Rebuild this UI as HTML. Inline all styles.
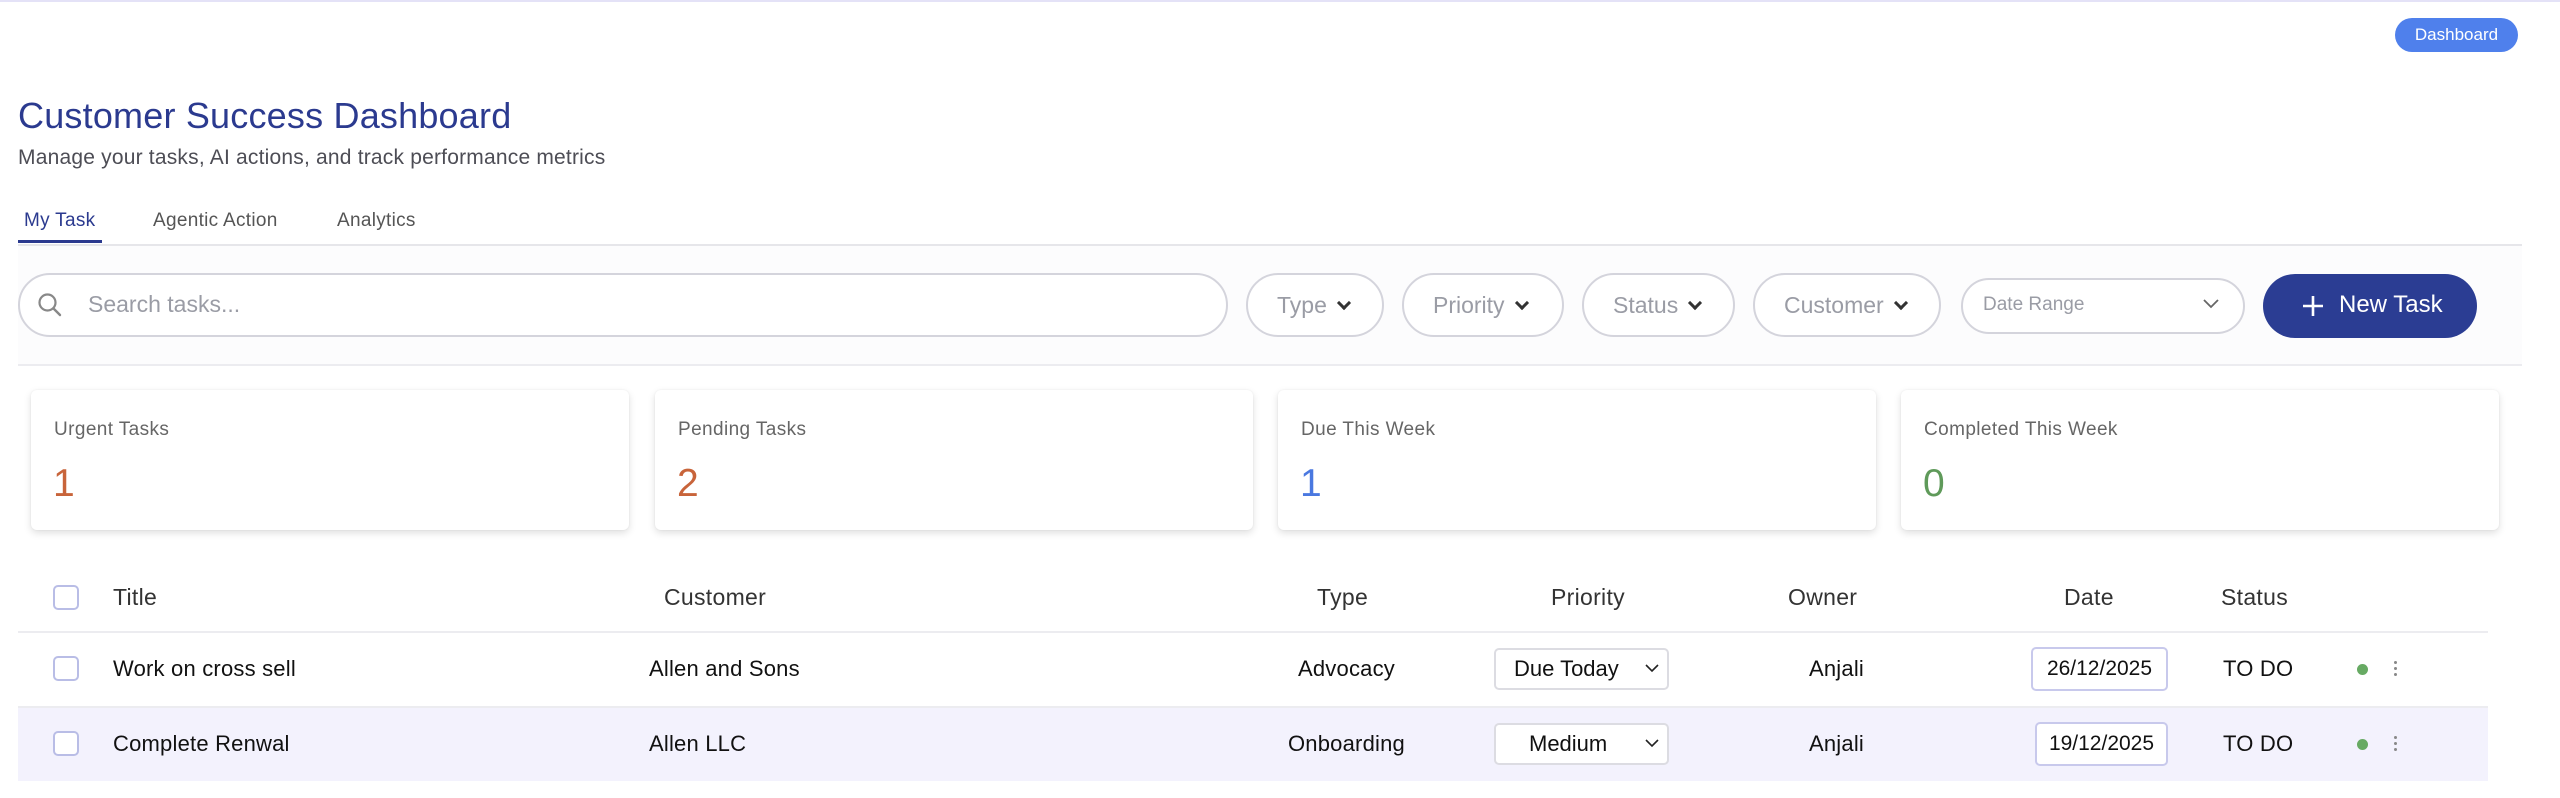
<!DOCTYPE html>
<html><head><meta charset="utf-8"><style>
*{box-sizing:border-box;margin:0;padding:0}
body{width:2560px;height:798px;background:#fff;font-family:"Liberation Sans",Arial,sans-serif;position:relative;overflow:hidden}
.a{position:absolute}
.topline{left:0;top:0;width:2560px;height:2px;background:#e4e2f7}
.pill{left:2395px;top:18px;width:123px;height:34px;border-radius:17px;background:#4f80ec;color:#fff;font-size:17px;line-height:34px;text-align:center}
h1{position:absolute;left:18px;top:95px;font-size:36px;font-weight:400;color:#2b3a8f;white-space:nowrap;letter-spacing:0.2px}
.sub{left:18px;top:146px;font-size:21px;color:#4d4d55;white-space:nowrap;letter-spacing:0.2px}
.tab{top:210px;font-size:19px;color:#555;white-space:nowrap;letter-spacing:0.3px}
.fbar{left:18px;top:244px;width:2504px;height:122px;background:#fcfcfd;border-top:2px solid #e6e6ea;border-bottom:2px solid #ececf0}
.search{left:18px;top:273px;width:1210px;height:64px;border:2px solid #d4d4dc;border-radius:32px;background:#fff}
.flt{top:273px;height:64px;border:2px solid #d4d4dc;border-radius:32px;background:#fff;font-size:23px;color:#9a9ca5;line-height:60px;padding-left:29px;white-space:nowrap}
.chev{display:inline-block;width:10px;height:10px;border-right:3px solid #333;border-bottom:3px solid #333;transform:rotate(45deg);margin-left:12px;position:relative;top:-5px}
.card{top:390px;height:140px;width:598px;background:#fff;border-radius:6px;box-shadow:0 3px 8px rgba(0,0,0,.13),0 0 2px rgba(0,0,0,.06)}
.card .l{position:absolute;left:23px;top:29px;font-size:19px;color:#666;letter-spacing:0.4px}
.card .n{position:absolute;left:22px;top:72px;font-size:39px}
.th{top:584px;font-size:23px;color:#333;white-space:nowrap;letter-spacing:0.3px}
.td{font-size:22px;color:#111;white-space:nowrap;letter-spacing:0.2px}
.cb{width:26px;height:25px;border:2px solid #b9bde6;border-radius:5px;background:#fff}
.sel{width:175px;height:42px;border:2px solid #dcdce2;border-radius:5px;background:#fff;font-size:22px;line-height:38px;color:#111}
.date{height:44px;border:2px solid #c8c9ec;border-radius:5px;background:#fff;font-size:21px;line-height:40px;text-align:center;color:#111}
.dot{width:11px;height:11px;border-radius:50%;background:#67aa63}
.kb{width:3px;height:3px;border-radius:50%;background:#888}
</style></head><body>
<div class="a topline"></div>
<div class="a pill">Dashboard</div>
<h1>Customer Success Dashboard</h1>
<div class="a sub">Manage your tasks, AI actions, and track performance metrics</div>
<div class="a tab" style="left:24px;color:#2b3a8f">My Task</div>
<div class="a tab" style="left:153px">Agentic Action</div>
<div class="a tab" style="left:337px">Analytics</div>
<div class="a" style="left:18px;top:240px;width:84px;height:3px;background:#2b3a8f"></div>
<div class="a fbar"></div>
<div class="a search"></div>
<svg class="a" style="left:36px;top:291px" width="28" height="28" viewBox="0 0 28 28"><circle cx="11.5" cy="11.5" r="8" fill="none" stroke="#888" stroke-width="2.2"/><line x1="17.5" y1="17.5" x2="24" y2="24" stroke="#888" stroke-width="2.4" stroke-linecap="round"/></svg>
<div class="a" style="left:88px;top:291px;font-size:23px;color:#9a9ca5">Search tasks...</div>
<div class="a flt" style="left:1246px;width:138px">Type<span class="chev"></span></div>
<div class="a flt" style="left:1402px;width:162px">Priority<span class="chev"></span></div>
<div class="a flt" style="left:1582px;width:153px">Status<span class="chev"></span></div>
<div class="a flt" style="left:1753px;width:188px">Customer<span class="chev"></span></div>
<div class="a" style="left:1961px;top:278px;width:284px;height:56px;border:2px solid #d4d4dc;border-radius:28px;background:#fff"></div>
<div class="a" style="left:1983px;top:294px;font-size:19px;color:#9a9ca5">Date Range</div>
<svg class="a" style="left:2202px;top:298px" width="18" height="12" viewBox="0 0 18 12"><path d="M2 2l7 7 7-7" fill="none" stroke="#666" stroke-width="1.8"/></svg>
<div class="a" style="left:2263px;top:274px;width:214px;height:64px;border-radius:32px;background:#2b3d93"></div>
<svg class="a" style="left:2301px;top:294px" width="24" height="24" viewBox="0 0 24 24"><path d="M12 2v20M2 12h20" stroke="#fff" stroke-width="2.6"/></svg>
<div class="a" style="left:2339px;top:291px;font-size:24px;color:#fff">New Task</div>
<div class="a card" style="left:31px"><div class="l">Urgent Tasks</div><div class="n" style="color:#c8643a">1</div></div>
<div class="a card" style="left:655px"><div class="l">Pending Tasks</div><div class="n" style="color:#c8643a">2</div></div>
<div class="a card" style="left:1278px"><div class="l">Due This Week</div><div class="n" style="color:#4a78e0">1</div></div>
<div class="a card" style="left:1901px"><div class="l">Completed This Week</div><div class="n" style="color:#5f9a5a">0</div></div>
<div class="a cb" style="left:53px;top:585px"></div>
<div class="a th" style="left:113px">Title</div>
<div class="a th" style="left:664px">Customer</div>
<div class="a th" style="left:1317px">Type</div>
<div class="a th" style="left:1551px">Priority</div>
<div class="a th" style="left:1788px">Owner</div>
<div class="a th" style="left:2064px">Date</div>
<div class="a th" style="left:2221px">Status</div>
<div class="a" style="left:18px;top:631px;width:2470px;height:2px;background:#ececf0"></div>
<div class="a" style="left:18px;top:706px;width:2470px;height:75px;background:#f3f2fd;border-top:2px solid #ececf0"></div>
<div class="a cb" style="left:53px;top:656px"></div>
<div class="a td" style="left:113px;top:656px">Work on cross sell</div>
<div class="a td" style="left:649px;top:656px">Allen and Sons</div>
<div class="a td" style="left:1298px;top:656px">Advocacy</div>
<div class="a sel" style="left:1494px;top:648px;padding-left:18px">Due Today</div>
<svg class="a" style="left:1645px;top:663px" width="14" height="10" viewBox="0 0 14 10"><path d="M1 2l6 6 6-6" fill="none" stroke="#222" stroke-width="1.6"/></svg>
<div class="a td" style="left:1809px;top:656px">Anjali</div>
<div class="a date" style="left:2031px;top:647px;width:137px">26/12/2025</div>
<div class="a td" style="left:2223px;top:656px">TO DO</div>
<div class="a dot" style="left:2357px;top:664px"></div>
<div class="a kb" style="left:2394px;top:661px"></div><div class="a kb" style="left:2394px;top:667px"></div><div class="a kb" style="left:2394px;top:673px"></div>
<div class="a cb" style="left:53px;top:731px"></div>
<div class="a td" style="left:113px;top:731px">Complete Renwal</div>
<div class="a td" style="left:649px;top:731px">Allen LLC</div>
<div class="a td" style="left:1288px;top:731px">Onboarding</div>
<div class="a sel" style="left:1494px;top:723px;padding-left:33px">Medium</div>
<svg class="a" style="left:1645px;top:738px" width="14" height="10" viewBox="0 0 14 10"><path d="M1 2l6 6 6-6" fill="none" stroke="#222" stroke-width="1.6"/></svg>
<div class="a td" style="left:1809px;top:731px">Anjali</div>
<div class="a date" style="left:2035px;top:722px;width:133px">19/12/2025</div>
<div class="a td" style="left:2223px;top:731px">TO DO</div>
<div class="a dot" style="left:2357px;top:739px"></div>
<div class="a kb" style="left:2394px;top:736px"></div><div class="a kb" style="left:2394px;top:742px"></div><div class="a kb" style="left:2394px;top:748px"></div>
</body></html>
